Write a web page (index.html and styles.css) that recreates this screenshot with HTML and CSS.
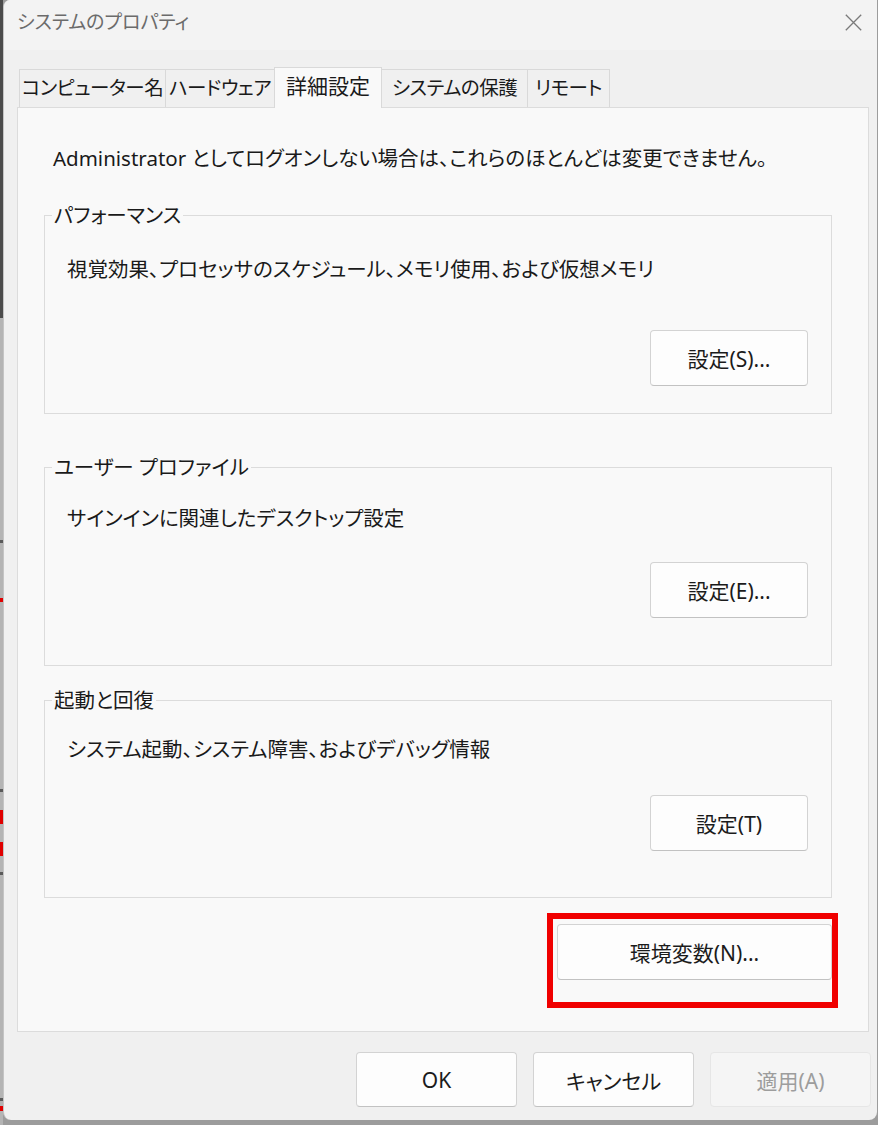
FILE: index.html
```html
<!DOCTYPE html>
<html lang="ja">
<head>
<meta charset="utf-8">
<title>システムのプロパティ</title>
<link rel="stylesheet" href="styles.css">
</head>
<body>
<div class="screen">
  <div class="strip"></div>
  <div class="window">
    <div class="titlebar">
      <span class="title">システムのプロパティ</span>
      <svg class="close" width="17" height="17" viewBox="0 0 17 17" aria-hidden="true">
        <path d="M0.8 0.8 L16.2 16.2 M16.2 0.8 L0.8 16.2" stroke="#7a7a7a" stroke-width="1.3" fill="none"/>
      </svg>
    </div>
    <div class="client">
      <div class="tabs">
        <div class="tab tab-computer">コンピューター名</div>
        <div class="tab tab-hardware">ハードウェア</div>
        <div class="tab tab-advanced active">詳細設定</div>
        <div class="tab tab-protect">システムの保護</div>
        <div class="tab tab-remote">リモート</div>
      </div>
      <div class="panel">
        <p class="note">Administrator としてログオンしない場合は、これらのほとんどは変更できません。</p>

        <div class="group group-perf">
          <span class="group-title">パフォーマンス</span>
          <p class="desc">視覚効果、プロセッサのスケジュール、メモリ使用、および仮想メモリ</p>
          <button class="btn btn-group">設定(S)...</button>
        </div>

        <div class="group group-profile">
          <span class="group-title">ユーザー プロファイル</span>
          <p class="desc">サインインに関連したデスクトップ設定</p>
          <button class="btn btn-group">設定(E)...</button>
        </div>

        <div class="group group-startup">
          <span class="group-title">起動と回復</span>
          <p class="desc">システム起動、システム障害、およびデバッグ情報</p>
          <button class="btn btn-group">設定(T)</button>
        </div>

        <div class="env-row">
          <button class="btn btn-env">環境変数(N)...<span class="highlight"></span></button>
        </div>
      </div>
      <div class="actions">
        <button class="btn btn-action">OK</button>
        <button class="btn btn-action">キャンセル</button>
        <button class="btn btn-action disabled">適用(A)</button>
      </div>
    </div>
  </div>
</div>
</body>
</html>
```

FILE: styles.css
```css
* { box-sizing: border-box; }

html, body {
  margin: 0;
  padding: 0;
}

body {
  background: #9c9c9c;
  font-family: "Noto Sans", "Noto Sans CJK JP", sans-serif;
  font-feature-settings: "palt";
  color: #1a1a1a;
  font-size: 20.5px;
  overflow: hidden;
}

.screen {
  display: flex;
  width: 878px;
  height: 1125px;
  align-items: flex-start;
  background: #9c9c9c;
}

.strip {
  width: 3px;
  height: 1125px;
  flex: none;
  background: linear-gradient(to bottom,
    #4b4b4b 0, #4b4b4b 318px,
    #b4b4b4 318px, #b4b4b4 540px,
    #5a5a5a 540px, #5a5a5a 543px,
    #b4b4b4 543px, #b4b4b4 598px,
    #e00000 598px, #e00000 602px,
    #b4b4b4 602px, #b4b4b4 789px,
    #5a5a5a 789px, #5a5a5a 792px,
    #b4b4b4 792px, #b4b4b4 810px,
    #e00000 810px, #e00000 824px,
    #b4b4b4 824px, #b4b4b4 842px,
    #e00000 842px, #e00000 856px,
    #b4b4b4 856px, #b4b4b4 872px,
    #5a5a5a 872px, #5a5a5a 875px,
    #b4b4b4 875px, #b4b4b4 1098px,
    #5a5a5a 1098px, #5a5a5a 1101px,
    #b4b4b4 1101px, #b4b4b4 1106px,
    #e00000 1106px, #e00000 1111px,
    #b4b4b4 1111px);
}

.window {
  width: 874px;
  height: 1120px;
  flex: none;
  background: #f0f0f0;
  border-left: 1px solid #c4c4c4;
  border-radius: 7px 0 8px 8px;
  overflow: hidden;
  display: flex;
  flex-direction: column;
}

.titlebar {
  height: 50px;
  flex: none;
  background: #f3f3f3;
  display: flex;
  align-items: flex-start;
  justify-content: space-between;
  padding: 8px 15px 0 13px;
}

.title {
  font-size: 19px;
  line-height: 28px;
  color: #6b6b6b;
}

.close {
  display: block;
  margin-top: 6px;
}

.client {
  padding: 0 8px 0 13px;
  display: flex;
  flex-direction: column;
}

.tabs {
  display: flex;
  align-items: flex-end;
  height: 40px;
  margin-top: 17px;
  padding-left: 2px;
}

.tab {
  height: 38px;
  border: 1px solid #d9d9d9;
  border-bottom: none;
  background: #f0f0f0;
  font-size: 19.5px;
  letter-spacing: -0.5px;
  line-height: 36px;
  text-align: center;
  white-space: nowrap;
  margin-left: -1px;
}

.tab:first-child { margin-left: 0; }

.tab-computer { width: 147px; }
.tab-hardware { width: 110px; }
.tab-advanced { width: 108px; letter-spacing: 0; font-size: 21px; }
.tab-protect  { width: 147px; }
.tab-remote   { width: 83px; }

.tab.active {
  height: 41px;
  margin-bottom: -1px;
  padding-bottom: 1px;
  background: #f9f9f9;
  position: relative;
  z-index: 1;
}

.panel {
  height: 925px;
  border: 1px solid #dcdcdc;
  background: #f9f9f9;
  display: flex;
  flex-direction: column;
}

.note {
  margin: 36px 0 0 35px;
  line-height: 28px;
  white-space: nowrap;
}

.group {
  position: relative;
  width: 788px;
  margin-left: 26px;
  border: 1px solid #dcdcdc;
  display: flex;
  flex-direction: column;
}

.group-title {
  position: absolute;
  top: -15px;
  left: 7px;
  padding: 0 2px;
  line-height: 28px;
  background: #f9f9f9;
  white-space: nowrap;
}

.desc {
  margin: 0;
  padding-left: 22px;
  line-height: 28px;
  white-space: nowrap;
}

.group-perf    { margin-top: 43px; height: 199px; padding-top: 39px; }
.group-profile { margin-top: 53px; height: 199px; padding-top: 36px; }
.group-startup { margin-top: 34px; height: 198px; padding-top: 34px; }

.group-perf .btn    { margin-top: 47px; }
.group-profile .btn { margin-top: 30px; }
.group-startup .btn { margin-top: 32px; }

.btn {
  font-family: inherit;
  font-feature-settings: "palt";
  font-size: 21px;
  color: #1b1b1b;
  background: #fdfdfd;
  border: 1px solid #d3d3d3;
  border-bottom-color: #c2c2c2;
  border-radius: 4px;
  padding: 0;
  display: flex;
  align-items: center;
  justify-content: center;
  white-space: nowrap;
}

.btn-group {
  width: 158px;
  height: 56px;
  align-self: flex-end;
  margin-right: 23px;
}

.env-row {
  display: flex;
  justify-content: flex-end;
  margin-top: 26px;
  padding-right: 36px;
}

.btn-env {
  position: relative;
  width: 275px;
  height: 56px;
}

.highlight {
  position: absolute;
  left: -11px;
  top: -12px;
  width: 291px;
  height: 95px;
  border: 6px solid #f00000;
  pointer-events: none;
}

.actions {
  display: flex;
  justify-content: flex-end;
  gap: 16px;
  margin-top: 20px;
  margin-right: -2px;
}

.btn-action {
  width: 161px;
  height: 55px;
}

.btn-action.disabled {
  background: #f5f5f5;
  border-color: #e6e6e6;
  color: #9d9d9d;
}
```
